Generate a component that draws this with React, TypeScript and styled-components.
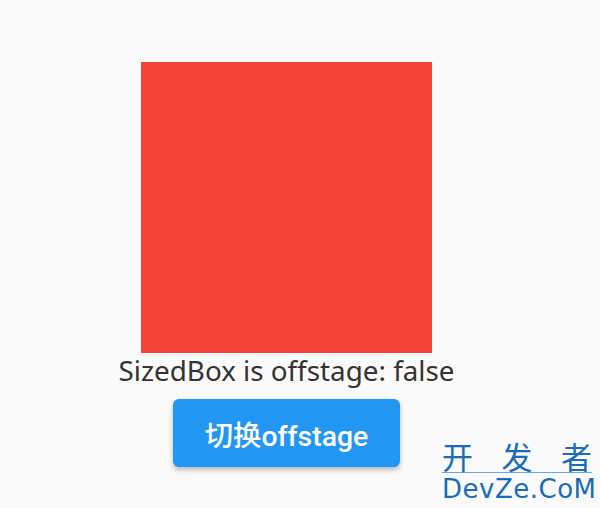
import styled, { createGlobalStyle } from "styled-components";

const GlobalStyle = createGlobalStyle`
  html, body {
    margin: 0;
    padding: 0;
    background: #fafafa;
  }
  body {
    font-family: "Noto Sans", Roboto, "Noto Sans CJK SC", sans-serif;
  }
`;

const Page = styled.div`
  position: relative;
  width: 600px;
  height: 508px;
  overflow: hidden;
  background: #fafafa;
`;

const Column = styled.div`
  display: flex;
  flex-direction: column;
  align-items: center;
  padding: 62px 27px 0 0;
`;

const Square = styled.div`
  width: 291px;
  height: 291px;
  background: #f44336;
`;

const Status = styled.div`
  margin-top: 0;
  font-size: 27.8px;
  line-height: 34px;
  color: #333333;
`;

const ToggleButton = styled.button`
  margin-top: 12px;
  width: 227px;
  height: 68px;
  border: none;
  border-radius: 6px;
  background: #2196f3;
  color: #ffffff;
  font-family: Roboto, "Noto Sans CJK SC", sans-serif;
  font-size: 28.4px;
  font-weight: 500;
  box-shadow: 0 3px 5px rgba(0, 0, 0, 0.25);
  cursor: pointer;
`;

const Watermark = styled.div`
  position: absolute;
  left: 442px;
  top: 440px;
  width: 150px;
  display: flex;
  flex-direction: column;
  color: #1a6cb8;
  font-family: "Noto Sans CJK SC", "DejaVu Sans", sans-serif;
`;

const WatermarkCn = styled.div`
  display: flex;
  justify-content: space-between;
  font-size: 31px;
  line-height: 32px;
  height: 32px;
  border-bottom: 1px solid #6aa8e0;
`;

const WatermarkEn = styled.div`
  margin-top: 3px;
  font-family: "DejaVu Sans", sans-serif;
  font-size: 26px;
  line-height: 26px;
  letter-spacing: 0.5px;
`;

export default function App() {
  return (
    <Page>
      <GlobalStyle />
      <Column>
        <Square />
        <Status>SizedBox is offstage: false</Status>
        <ToggleButton>切换offstage</ToggleButton>
      </Column>
      <Watermark>
        <WatermarkCn>
          <span>开</span>
          <span>发</span>
          <span>者</span>
        </WatermarkCn>
        <WatermarkEn>DevZe.CoM</WatermarkEn>
      </Watermark>
    </Page>
  );
}
